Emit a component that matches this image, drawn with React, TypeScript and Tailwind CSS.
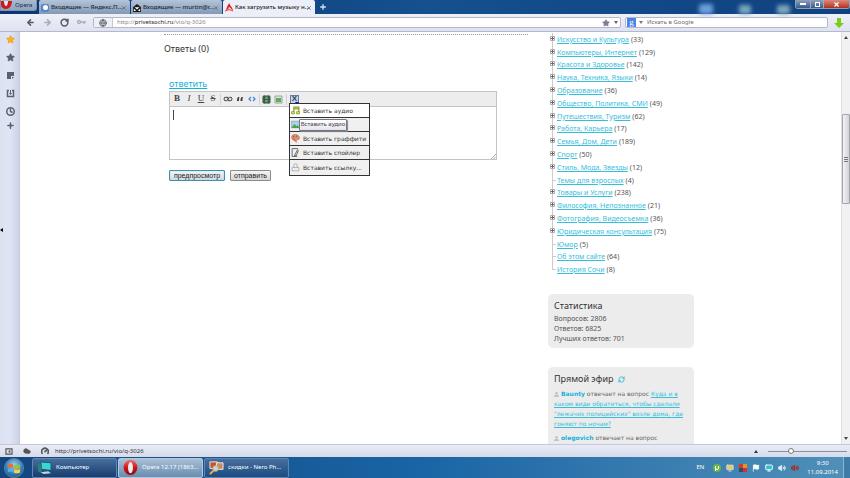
import React from "react";
import {
  ArrowLeft, ArrowRight, RotateCw, Globe, Star, X, Plus, Clock,
  Cloud, Gauge, Link, Film, RefreshCw, Flag, Volume2, Monitor,
} from "lucide-react";

type Category = { name: string; count: number; leaf?: boolean };

const categories: Category[] = [
  { name: "Искусство и Культура", count: 33 },
  { name: "Компьютеры, Интернет", count: 129 },
  { name: "Красота и Здоровье", count: 142 },
  { name: "Наука, Техника, Языки", count: 14 },
  { name: "Образование", count: 36 },
  { name: "Общество, Политика, СМИ", count: 49 },
  { name: "Путешествия, Туризм", count: 62 },
  { name: "Работа, Карьера", count: 17 },
  { name: "Семья, Дом, Дети", count: 189 },
  { name: "Спорт", count: 50 },
  { name: "Стиль, Мода, Звезды", count: 12 },
  { name: "Темы для взрослых", count: 4, leaf: true },
  { name: "Товары и Услуги", count: 238 },
  { name: "Философия, Непознанное", count: 21 },
  { name: "Фотография, Видеосъемка", count: 36 },
  { name: "Юридическая консультация", count: 75 },
  { name: "Юмор", count: 5, leaf: true },
  { name: "Об этом сайте", count: 64, leaf: true },
  { name: "История Сочи", count: 8, leaf: true },
];

function OperaMark({ className }: { className: string }) {
  return (
    <svg viewBox="0 0 16 16" className={className} aria-hidden="true">
      <defs>
        <linearGradient id="opera" x1="0" y1="0" x2="0" y2="1">
          <stop offset="0" stopColor="#f46a62" />
          <stop offset="0.5" stopColor="#d01818" />
          <stop offset="1" stopColor="#8f0a0a" />
        </linearGradient>
      </defs>
      <path fill="#e9eef4" d="M8 1a4 7 0 1 0 0 14A4 7 0 1 0 8 1z" />
      <path fillRule="evenodd" fill="url(#opera)" d="M8 0a7.400 8 0 1 0 0 16A7.400 8 0 1 0 8 0zm0 2c1.700 0 2.600 2.700 2.600 6s-.9 6-2.600 6-2.600-2.700-2.600-6S6.300 2 8 2z" />
    </svg>
  );
}

function Tab({ icon, title, active }: { icon: React.ReactNode; title: string; active?: boolean }) {
  return (
    <div
      className={`flex h-[14px] items-center rounded-t-[2px] pl-[2px] pr-[3px] pt-[1px] ${
        active ? "w-[92px] bg-[#eceef8] text-[#222]" : "w-[91px] bg-gradient-to-b from-[#b4c4d9] to-[#8399b5] text-[#1c2838]"
      }`}
    >
      <span className="flex w-[10px] shrink-0 items-center">{icon}</span>
      <span className="min-w-0 flex-1 whitespace-nowrap text-[6px] font-medium">{title}</span>
      <button aria-label="Закрыть вкладку" className="shrink-0">
        <X className="size-[6px] text-[#586578]" strokeWidth={3} />
      </button>
    </div>
  );
}

function TabBar() {
  return (
    <header className="relative flex h-[14px] shrink-0 items-end bg-gradient-to-r from-[#0b3672] via-[#15508f] to-[#0f4180]">
      <button className="flex h-[11px] w-[37px] items-center self-start rounded-br-[3px] border border-t-0 border-[#8193ac] bg-gradient-to-b from-[#a9bad0] to-[#8fa5c1] text-[6px] text-[#1e2a3a]">
        <svg viewBox="0 0 11 9" className="mr-[3px] h-[9px] w-[11px]" aria-hidden="true">
          <path d="M0 0h11C11 5 8 8 5 8S0 6 0 4z" fill="#c91a1c" />
          <path d="M3 0h4c0 3-1 5-2 5S3 3 3 0z" fill="#e5eaf0" />
        </svg>
        Opera
      </button>
      <div className="ml-[2px] flex gap-[1px]">
        <Tab
          icon={<span className="flex size-[8px] items-center justify-center rounded-[2px] bg-[#5a86cc]"><span className="size-[5px] rounded-full bg-white" /></span>}
          title="Входящие — Яндекс.П..."
        />
        <Tab
          icon={
            <svg viewBox="0 0 10 10" className="size-[8px]" aria-hidden="true">
              <path d="M0 4 5 0l5 4v6H0z" fill="#1a1a1a" />
              <path d="M2 4h6L5 7z" fill="#fff" />
              <path d="M1 6l3 2-3 1zM9 6L6 8l3 1z" fill="#fff" />
            </svg>
          }
          title="Входящие — murtin@r..."
        />
        <Tab
          active
          icon={
            <svg viewBox="0 0 10 10" className="size-[9px]" aria-hidden="true">
              <path d="M1 8C2 4 4 1 5 0c0 3 3 4 4 8-3-2-5-2-8 0z" fill="#df2020" />
              <path d="M4 5c1-1 2 0 3 2-2-1-3-1-3 0z" fill="#fff" />
              <path d="M0 9c3-2 6-2 9 0" stroke="#df2020" fill="none" />
            </svg>
          }
          title="Как загрузить музыку н..."
        />
      </div>
      <button aria-label="Новая вкладка" className="mb-[3px] ml-[4px]">
        <Plus className="size-[8px] text-[#d4e2f2]" strokeWidth={4} />
      </button>
      <div className="ml-auto mr-[5px] flex h-[14px] items-end gap-[26px]" aria-hidden="true">
        <span className="h-[10px] w-[14px] rounded-[2px] bg-[#6b9fdd] blur-[2px]" />
        <span className="h-[9px] w-[12px] rounded-[2px] bg-[#7ba8c0] blur-[2px]" />
        <span className="h-[9px] w-[13px] rounded-[2px] bg-[#7fa6bb] blur-[2px]" />
      </div>
      <div className="flex h-[9px] self-start overflow-hidden rounded-b-[3px] border border-t-0 border-[#8ba0bc]">
        <button aria-label="Свернуть" className="flex w-[14px] items-center justify-center bg-gradient-to-b from-[#8da2be] to-[#3c5a85]"><span className="h-[2px] w-[6px] bg-white" /></button>
        <button aria-label="Развернуть" className="flex w-[14px] items-center justify-center border-x border-[#9aacc5] bg-gradient-to-b from-[#8da2be] to-[#3c5a85]"><span className="size-[5px] border border-white" /></button>
        <button aria-label="Закрыть" className="flex w-[25px] items-center justify-center bg-gradient-to-b from-[#d9887c] to-[#b62a18]"><X className="size-[7px] text-white" strokeWidth={4} /></button>
      </div>
    </header>
  );
}

function Caret({ className }: { className: string }) {
  return <svg viewBox="0 0 4 3" className={`h-[3px] w-[4px] ${className}`} aria-hidden="true"><path d="M0 0h4L2 3z" fill="currentColor" /></svg>;
}

function AddressBar() {
  return (
    <nav className="flex h-[18px] shrink-0 items-center border-b border-[#b4b9cb] bg-gradient-to-b from-[#eef0f9] to-[#dfe2f0] pr-[6px] text-[6px]">
      <div className="flex w-[92px] shrink-0 items-center gap-[8px] pl-[26px] text-[#555b69]">
        <button aria-label="Назад"><ArrowLeft className="size-[9px]" strokeWidth={4} /></button>
        <button aria-label="Вперёд" className="text-[#a8adba]"><ArrowRight className="size-[9px]" strokeWidth={4} /></button>
        <button aria-label="Обновить"><RotateCw className="size-[9px]" strokeWidth={4} /></button>
        <button aria-label="Пароли" className="text-[#a8adba]">
          <svg viewBox="0 0 9 9" className="size-[9px]"><circle cx="2" cy="4" r="1.500" fill="none" stroke="currentColor" strokeWidth="1.300" /><path d="M4 4h5M7 4v2" stroke="currentColor" strokeWidth="1.300" /></svg>
        </button>
      </div>
      <div className="ml-[1px] flex h-[11px] min-w-0 flex-1 items-center rounded-[2px] border border-[#b3b7c6] bg-white">
        <span className="flex h-full w-[19px] shrink-0 items-center justify-center border-r border-[#c6c9d4] bg-[#eff0f6]">
          <Globe className="size-[8px] text-[#666b78]" strokeWidth={3} />
        </span>
        <div className="relative h-full flex-1">
          <input aria-label="Адрес" defaultValue="http://privetsochi.ru/vio/q-3026" className="h-full w-full bg-transparent pl-[4px] text-[6px] text-transparent outline-none" />
          <span className="pointer-events-none absolute inset-0 flex items-center pl-[4px] text-[#858a94]" aria-hidden="true">
            http://<span className="text-[#222]">privetsochi.ru</span>/vio/q-3026
          </span>
        </div>
        <Star className="mr-[4px] size-[8px] fill-[#7b808c] text-[#7b808c]" />
        <Caret className="mr-[2px] text-[#666]" />
      </div>
      <div className="ml-[4px] flex h-[11px] w-[203px] shrink-0 items-center rounded-[2px] border border-[#b3b7c6] bg-white pl-[1px]">
        <span className="flex size-[9px] items-center justify-center bg-[#4a85e8] pb-[2px] font-['Liberation_Serif',serif] text-[9px] leading-[6px] text-white">g</span>
        <Caret className="ml-[3px] text-[#777]" />
        <input aria-label="Поиск" placeholder="Искать в Google" className="ml-[4px] min-w-0 flex-1 bg-transparent text-[6px] text-[#555] outline-none placeholder:text-[#6c6c6c]" />
      </div>
      <button aria-label="Загрузки" className="ml-[6px]">
        <svg viewBox="0 0 10 10" className="size-[10px]"><path d="M3 0h4v5h3L5 10 0 5h3z" fill="#7ccc1c" /></svg>
      </button>
    </nav>
  );
}

function Panels() {
  return (
    <aside className="relative flex w-[20px] shrink-0 flex-col items-center gap-[9px] border-r border-[#c3c9dc] bg-gradient-to-r from-[#dce2f2] via-[#dfe5f5] to-[#ccd3e8] pl-[2px] pt-[3px] text-[#5a6070]">
      <button aria-label="Закладки"><Star className="size-[9px] fill-[#fbb316] text-[#ee9b0c]" /></button>
      <button aria-label="Избранное"><Star className="size-[9px] fill-current" /></button>
      <button aria-label="Заметки">
        <svg viewBox="0 0 9 9" className="size-[9px]"><path d="M1 1h7v4H5v3H1z" fill="currentColor" /><path d="M6 6h2L6 8z" fill="currentColor" /></svg>
      </button>
      <button aria-label="Загрузки">
        <svg viewBox="0 0 9 9" className="size-[9px]"><path d="M3 1.500H1.500v6h6v-6H6" fill="none" stroke="currentColor" strokeWidth="1.500" /><path d="M4 1h1v3h1L4.500 6 3 4h1z" fill="currentColor" /></svg>
      </button>
      <button aria-label="История"><Clock className="size-[9px]" strokeWidth={4} /></button>
      <button aria-label="Добавить панель" className="-mt-[4px]"><Plus className="size-[9px]" strokeWidth={4} /></button>
      <svg viewBox="0 0 3 4" className="absolute left-0 top-[196px] h-[4px] w-[3px]" aria-hidden="true"><path d="M3 0v4L0 2z" /></svg>
    </aside>
  );
}

const menuItems = [
  { label: "Вставить аудио", icon: <svg viewBox="0 0 16 16" className="size-[9px]"><path d="M5 12V2h9v10M5 5h9" fill="none" stroke="#8d9c20" strokeWidth="2" /><path d="M1 10h5v4H1zM10 10h5v4h-5z" fill="#dde39a" stroke="#8d9c20" strokeWidth="1.500" /></svg> },
  { label: "", icon: <svg viewBox="0 0 16 16" className="size-[9px]"><rect x="1" y="2" width="14" height="12" fill="#a5d2f1" stroke="#7a97ac" /><path d="M1 14l5-7 4 4 2-2 3 5z" fill="#4da344" /></svg> },
  { label: "Вставить граффити", icon: <svg viewBox="0 0 16 16" className="size-[9px]"><path d="M8 1c4 0 7 3 7 6s-3 3-4 3-1 2-3 2-7-2-7-6 3-5 7-5z" fill="#d89676" stroke="#a75d47" /><circle cx="5" cy="5" r="1.500" fill="#e93e2e" /><circle cx="10" cy="4" r="1.500" fill="#4f73c4" /><path d="M4 7l6 8" stroke="#e66d30" strokeWidth="2" /></svg> },
  { label: "Вставить спойлер", icon: <svg viewBox="0 0 16 16" className="size-[9px]"><path d="M12 3V1H2v14h9M11 4L6 14h3l4-9z" fill="none" stroke="#555" strokeWidth="1.500" /></svg> },
  { label: "Вставить ссылку...", icon: <svg viewBox="0 0 16 16" className="size-[9px]"><path d="M5 8V4q0-3 3-3t3 3v4M2 8h12v6H2z" fill="#eee" stroke="#aaa" strokeWidth="1.500" /></svg> },
];

function InsertMenu() {
  return (
    <div className="relative">
      <button aria-label="Вставить" className="relative flex size-[9px] items-center justify-center border border-[#647d9c] bg-[#c6d6e6] font-['Liberation_Sans',sans-serif] text-[8px] font-bold leading-none text-[#23426a]">
        X
        <Caret className="absolute -bottom-[2px] -right-[1px] text-[#0a0ad0]" />
      </button>
      <div className="absolute -left-[1px] top-[8px] z-10 grid h-[73px] w-[81px] grid-rows-5 divide-y divide-[#333] border border-[#333] bg-[#f0f0f0]">
        {menuItems.map((item, i) => (
          <button key={i} aria-label={item.label || "Вставить изображение"} className={`flex min-h-0 min-w-0 items-center whitespace-nowrap pl-[1px] text-[6px] text-[#333] ${i === 0 ? "bg-white" : ""}`}>
            {item.icon}
            <span className="ml-[3px] font-['DejaVu_Sans',sans-serif]">{item.label}</span>
          </button>
        ))}
      </div>
      <div role="tooltip" className="absolute left-[9px] top-[24px] z-20 flex h-[12px] w-[48px] items-center justify-center whitespace-nowrap rounded-[1px] border border-[#777] bg-gradient-to-b from-white to-[#e4e5f0] font-['Noto_Sans',sans-serif] text-[6px] text-[#444] shadow-[1px_1px_1px_#888]">
        Вставить аудио
      </div>
    </div>
  );
}

function Editor() {
  const tool = "flex h-[10px] w-[12px] items-center justify-center text-[#444]";
  const rule = "h-[11px] w-px bg-[#d2d2d2]";
  return (
    <form className="ml-[5px] mt-[1px]" onSubmit={(e) => e.preventDefault()}>
      <div className="mr-[31px] border border-[#c4c4c4]">
        <div className="flex h-[15px] items-center border-b border-[#c4c4c4] bg-[#ededed] pl-[1px] font-['Liberation_Serif',serif] text-[9px]">
          <button aria-label="Жирный" className={`${tool} font-bold`}>B</button>
          <button aria-label="Курсив" className={`${tool} italic`}>I</button>
          <button aria-label="Подчёркнутый" className={`${tool} underline`}>U</button>
          <button aria-label="Зачёркнутый" className={`${tool} line-through`}>S</button>
          <span className={`${rule} mx-[1px]`} />
          <button aria-label="Ссылка" className={tool}><Link className="size-[8px] rotate-45" strokeWidth={3} /></button>
          <button aria-label="Цитата" className={tool}>
            <svg viewBox="0 0 6 4" className="h-[4px] w-[6px]"><path d="M0 4V2L1 0h1.500L2 2v2zM3.500 4V2l1-2H6l-.5 2v2z" fill="currentColor" /></svg>
          </button>
          <button aria-label="Код" className={`${tool} text-[#4287dd]`}>
            <svg viewBox="0 0 8 6" className="h-[6px] w-[8px]"><path d="M3 1 1 3l2 2M5 1l2 2-2 2" fill="none" stroke="currentColor" strokeWidth="1.300" /></svg>
          </button>
          <span className={`${rule} ml-[1px]`} />
          <button aria-label="Видео" className={tool}><Film className="size-[9px] fill-[#73a47d] text-[#355b43]" strokeWidth={3} /></button>
          <button aria-label="Изображение" className={tool}>
            <svg viewBox="0 0 9 9" className="size-[9px]"><path d="M1 1h7v7H1z" fill="#d5e6ee" stroke="#8faa98" /><path d="M2 3h5v4H2z" fill="#69a84e" /></svg>
          </button>
          <span className={`${rule} ml-[2px] mr-[3px]`} />
          <InsertMenu />
        </div>
        <div className="relative">
          <textarea aria-label="Ответ" className="block h-[52px] w-full resize-none bg-white px-[3px] py-[2px] text-[8px] outline-none" />
          <span className="absolute left-[3px] top-[3px] h-[10px] w-px bg-[#444]" />
          <svg viewBox="0 0 5 5" className="absolute bottom-0 right-0 size-[5px]" aria-hidden="true"><path d="M0 5 5 0M2.500 5 5 2.500" stroke="#888" strokeWidth=".7" /></svg>
        </div>
      </div>
      <div className="mt-[10px] flex gap-[5px] font-['Liberation_Sans',sans-serif] text-[7px] text-[#222]">
        <button className="h-[11px] w-[56px] rounded-[1px] border border-[#3c8fb0] bg-gradient-to-b from-[#f2f3f4] to-[#d4dde2] leading-[8px] shadow-[inset_0_0_1px_#45c5ee]">предпросмотр</button>
        <button className="h-[11px] w-[41px] rounded-[1px] border border-[#8b8b8b] bg-gradient-to-b from-[#f4f4f4] to-[#d6d6d6] leading-[8px]">отправить</button>
      </div>
    </form>
  );
}

function Categories() {
  return (
    <ul className="grid h-[243px] auto-rows-fr pl-[2px] text-[7px] leading-none">
      {categories.map((c, i) => (
        <li key={c.name} className="flex min-h-0 items-center whitespace-nowrap text-[#555]">
          <span className={`relative mr-[1px] flex w-[6px] items-center self-stretch before:absolute before:left-[2px] before:top-0 before:w-px before:bg-[#ccc] ${i === categories.length - 1 ? "before:h-1/2" : "before:h-full"}`}>
            {c.leaf ? (
              <span className="ml-[2px] h-px w-[4px] bg-[#ccc]" />
            ) : (
              <svg viewBox="0 0 5 5" className="relative mb-[2px] size-[5px]" aria-hidden="true"><path d="M.5.5h4v4h-4z" fill="#fff" stroke="#aaa" /><path d="M1 2.500h3M2.500 1v3" stroke="#666" /></svg>
            )}
          </span>
          <a href="#" className="mr-[2px] text-[#35bedb] underline">{c.name}</a>({c.count})
        </li>
      ))}
    </ul>
  );
}

function Person() {
  return <svg viewBox="0 0 8 8" className="mr-[2px] inline size-[5px]" aria-hidden="true"><circle cx="4" cy="2" r="2" fill="#c3c3c3" /><path d="M0 8q0-4 4-4t4 4z" fill="#c3c3c3" /></svg>;
}

function Sidebar() {
  return (
    <aside className="w-[146px] shrink-0 pt-[1px]">
      <Categories />
      <section className="mt-[18px] rounded-[5px] bg-[#ececec] px-[6px] pb-[4px] pt-[6px] text-[7px] leading-[10px] text-[#555]">
        <h2 className="mb-[2px] text-[9px] leading-[12px] text-[#333]">Статистика</h2>
        <p>Вопросов: 2806</p>
        <p>Ответов: 6825</p>
        <p>Лучших ответов: 701</p>
      </section>
      <section className="mt-[19px] rounded-t-[5px] bg-[#ececec] px-[6px] pb-[40px] pt-[6px] font-['DejaVu_Sans',sans-serif] text-[6px] leading-[10px] text-[#666]">
        <h2 className="mb-[4px] flex items-center gap-[4px] font-['Noto_Sans',sans-serif] text-[9px] leading-[12px] text-[#333]">
          Прямой эфир <RefreshCw className="size-[7px] text-[#35bedb]" strokeWidth={3} />
        </h2>
        <p>
          <Person /><a href="#" className="font-bold text-[#15b2dc]">Baunty</a> отвечает на вопрос{" "}
          <a href="#" className="text-[#35bedb] underline">Куда и в каком виде обратиться, чтобы сделали "лежачих полицейских" возле дома, где гоняют по ночам?</a>
        </p>
        <p className="mt-[4px]">
          <Person /><a href="#" className="font-bold text-[#15b2dc]">olegovich</a> отвечает на вопрос
        </p>
      </section>
    </aside>
  );
}

function StatusBar() {
  return (
    <footer className="flex h-[13px] shrink-0 items-center border-t border-[#c6cad8] bg-gradient-to-b from-[#e9ecf7] to-[#d6dbea] pl-[5px] pr-[3px] text-[6px] text-[#333]">
      <svg viewBox="0 0 9 8" className="h-[7px] w-[8px]" aria-hidden="true"><path d="M1 1h7v6H1z" fill="none" stroke="#555" strokeWidth="1.300" /><path d="M6 2v4L3.500 4z" fill="#555" /></svg>
      <Cloud className="ml-[10px] size-[8px] fill-[#555] text-[#555]" />
      <Gauge className="ml-[10px] size-[8px] text-[#555]" strokeWidth={5} />
      <span className="ml-[6px]">http://privetsochi.ru/vio/q-3026</span>
      <Caret className="ml-auto mr-[10px] rotate-180" />
      <input type="range" aria-label="Масштаб" min="0" max="100" defaultValue="27" className="h-[6px] w-[79px] appearance-none bg-[linear-gradient(#8b909c,#8b909c)] bg-[length:100%_1px] bg-center bg-no-repeat [&::-webkit-slider-thumb]:size-[6px] [&::-webkit-slider-thumb]:appearance-none [&::-webkit-slider-thumb]:rounded-full [&::-webkit-slider-thumb]:border [&::-webkit-slider-thumb]:border-[#777] [&::-webkit-slider-thumb]:bg-white" />
    </footer>
  );
}

function Taskbar() {
  const task = "flex h-[20px] w-[85px] items-center gap-[4px] rounded-[2px] border px-[4px] whitespace-nowrap text-[6px] text-white";
  return (
    <footer className="flex h-[21px] shrink-0 items-center bg-gradient-to-r from-[#15457f] via-[#1965a5] to-[#5090b8]">
      <button aria-label="Пуск" className="ml-[4px] mr-[8px] flex size-[20px] items-center justify-center rounded-full border border-[#4a86b8] bg-[radial-gradient(circle_at_50%_35%,#a8d0e6,#2f78ad_60%,#144777)]">
        <svg viewBox="0 0 16 16" className="size-[14px]"><path d="M1 4q3-2 6 0v4Q4 6 1 8z" fill="#ef6b2e" /><path d="M8 4q3 2 7 0v4q-4 2-7 0z" fill="#91c83e" /><path d="M1 9q3-2 6 0v4q-3-2-6 0z" fill="#4ab5ec" /><path d="M8 9q3 2 7 0v4q-4 2-7 0z" fill="#fbd040" /></svg>
      </button>
      <div className="flex gap-[1px]">
        <button className={`${task} border-[#5f87b0] bg-gradient-to-b from-[#476f9b] to-[#173d70]`}>
          <svg viewBox="0 0 16 16" className="size-[15px]"><path d="M4 2l11 1v8L5 10z" fill="#3ed4d2" stroke="#0a5c78" /><path d="M1 4l4 1v9l-4-2z" fill="#2a8078" /><path d="M4 13l8-1 3 2-8 1z" fill="#bfd4df" /></svg>
          Компьютер
        </button>
        <button className={`${task} border-[#b5c8dc] bg-gradient-to-b from-[#a9bfd5] to-[#688db1]`}>
          <OperaMark className="size-[15px] shrink-0" />
          Opera 12.17 (1863...
        </button>
        <button className={`${task} border-[#5f87b0] bg-gradient-to-b from-[#476f9b] to-[#1a4c83]`}>
          <svg viewBox="0 0 16 16" className="size-[15px] shrink-0"><path d="M1 2h8v7H1z" fill="#c55232" stroke="#eee" /><path d="M8 3h7v7H8z" fill="#c58b6c" stroke="#eee" /><circle cx="7" cy="9" r="3" fill="#b8d6ec" stroke="#e6a448" /><path d="M5 11l-4 4" stroke="#f0b044" strokeWidth="2" /></svg>
          скидки - Nero Ph...
        </button>
      </div>
      <div className="ml-auto flex items-center gap-[5px] text-[6px] text-white">
        <span className="mr-[4px]">EN</span>
        <svg viewBox="0 0 8 8" className="size-[8px]" aria-hidden="true"><circle cx="4" cy="4" r="4" fill="#69b644" /><path d="M2.500 7V2M2.500 4q0 1.500 1.500 1.500T5.500 4V2" fill="none" stroke="#fff" /></svg>
        <Monitor className="size-[8px] fill-[#e8c86a] text-[#d2e2ee]" />
        <span className="grid size-[8px] grid-cols-2"><i className="bg-[#d63d27]" /><i className="bg-[#e7932b]" /><i className="bg-[#344a70]" /><i className="bg-[#ce3427]" /></span>
        <Flag className="size-[8px] fill-white" />
        <Monitor className="size-[8px] fill-[#32bfd0] text-[#e8f4fa]" strokeWidth={3} />
        <Volume2 className="size-[8px] fill-[#e7eef4]" />
        <Volume2 className="size-[8px] fill-[#b44127] text-[#9c2e22]" strokeWidth={3} />
        <div className="ml-[3px] text-center leading-[9px]">9:30<br />11.09.2014</div>
        <button aria-label="Показать рабочий стол" className="h-[21px] w-[7px] border-l border-[#8ab8d4] bg-[#3f7ca8]" />
      </div>
    </footer>
  );
}

export default function App() {
  return (
    <div className="flex h-screen flex-col overflow-hidden bg-white font-['Noto_Sans',sans-serif]">
      <TabBar />
      <AddressBar />
      <div className="flex min-h-0 flex-1">
        <Panels />
        <main className="min-w-0 flex-1 overflow-hidden pr-[3px]">
          <div className="mx-auto flex w-[530px] gap-[20px]">
            <section className="min-w-0 flex-1 pt-[2px]">
              <div className="border-t border-dotted border-[#999]" />
              <h1 className="mt-[8px] text-[9px] leading-[12px] text-[#333]">Ответы (0)</h1>
              <h2 className="ml-[5px] mt-[23px] text-[9px] leading-[12px]">
                <a href="#" className="text-[#15b2dc] underline">ответить</a>
              </h2>
              <Editor />
            </section>
            <Sidebar />
          </div>
        </main>
        <div className="flex w-[9px] shrink-0 flex-col items-center border-l border-[#e0e0e0] bg-[#f1f1f3] py-[4px] text-[#444]" aria-hidden="true">
          <Caret className="rotate-180" />
          <span className="mb-auto mt-[75px] flex h-[90px] w-[8px] flex-col items-center justify-center gap-px rounded-[1px] border border-[#a2a4aa] bg-gradient-to-r from-[#f4f4f5] to-[#d2d3d8]">
            <span className="h-px w-[4px] bg-[#777]" />
            <span className="h-px w-[4px] bg-[#777]" />
            <span className="h-px w-[4px] bg-[#777]" />
          </span>
          <Caret className="" />
        </div>
      </div>
      <StatusBar />
      <Taskbar />
    </div>
  );
}
